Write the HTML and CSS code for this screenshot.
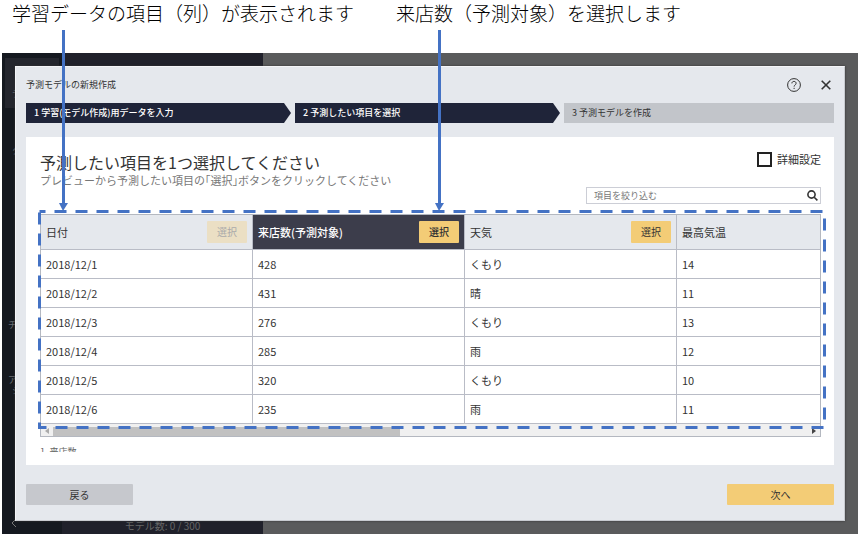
FILE: index.html
```html
<!DOCTYPE html>
<html lang="ja">
<head>
<meta charset="utf-8">
<title>予測モデルの新規作成</title>
<link rel="stylesheet" href="styles.css">
</head>
<body>
<header class="captions">
  <p class="caption caption-first">学習データの項目（列）が表示されます</p>
  <p class="caption">来店数（予測対象）を選択します</p>
</header>
<div class="arrow arrow-items"></div>
<div class="arrow arrow-target"></div>

<main class="app">
  <div class="backdrop">
    <nav class="rail">
      <span class="rail-item rail-item-active">デ</span>
      <span class="rail-item rail-second">タ</span>
      <span class="rail-item rail-third">チ</span>
      <span class="rail-item rail-fourth">ア</span>
      <span class="rail-item">シ</span>
      <svg class="rail-back" viewBox="0 0 6 10"><path d="M5 1 1 5l4 4"/></svg>
    </nav>
    <aside class="models">モデル数: 0 / 300</aside>
  </div>

  <section class="dialog">
    <div class="dialog-head">
      <h1 class="dialog-title">予測モデルの新規作成</h1>
      <button class="icon-button" type="button" aria-label="ヘルプ">
        <svg class="icon-help" viewBox="0 0 14 14"><circle cx="7" cy="7" r="6.4"/><path d="M4.9 5.4c0-1.3.9-2 2.1-2s2.1.8 2.1 1.9c0 1.6-2 1.7-2 3.3M7.1 9.8v1.2"/></svg>
      </button>
      <button class="icon-button" type="button" aria-label="閉じる">
        <svg class="icon-close" viewBox="0 0 10 10"><path d="M.7.7l8.6 8.6M9.3.7.7 9.3"/></svg>
      </button>
    </div>

    <ol class="steps">
      <li class="step step-done">1 学習(モデル作成)用データを入力</li>
      <li class="step step-done">2 予測したい項目を選択</li>
      <li class="step step-last">3 予測モデルを作成</li>
    </ol>

    <div class="panel">
      <div class="panel-head">
        <div>
          <h2 class="panel-title">予測したい項目を1つ選択してください</h2>
          <p class="panel-note">プレビューから予測したい項目の「選択」ボタンをクリックしてください</p>
        </div>
        <label class="detail"><input class="detail-box" type="checkbox">詳細設定</label>
      </div>
      <div class="search">
        <input class="search-input" type="search" aria-label="項目を絞り込む" placeholder="項目を絞り込む">
        <svg class="search-icon" viewBox="0 0 11 11"><circle cx="4.5" cy="4.5" r="3.6"/><path d="M7.2 7.2l3.2 3.2"/></svg>
      </div>

      <div class="preview">
        <table class="table">
          <colgroup><col class="col-wide"><col class="col-wide"><col class="col-wide"><col></colgroup>
          <thead>
            <tr>
              <th><div class="th">日付<button class="pick" type="button" disabled>選択</button></div></th>
              <th class="target"><div class="th">来店数(予測対象)<button class="pick" type="button">選択</button></div></th>
              <th><div class="th">天気<button class="pick" type="button">選択</button></div></th>
              <th><div class="th">最高気温</div></th>
            </tr>
          </thead>
          <tbody>
            <tr><td>2018/12/1</td><td>428</td><td>くもり</td><td>14</td></tr>
            <tr><td>2018/12/2</td><td>431</td><td>晴</td><td>11</td></tr>
            <tr><td>2018/12/3</td><td>276</td><td>くもり</td><td>13</td></tr>
            <tr><td>2018/12/4</td><td>285</td><td>雨</td><td>12</td></tr>
            <tr><td>2018/12/5</td><td>320</td><td>くもり</td><td>10</td></tr>
            <tr><td>2018/12/6</td><td>235</td><td>雨</td><td>11</td></tr>
          </tbody>
        </table>
        <div class="scrollbar">
          <svg class="scroll-arrow scroll-arrow-off" viewBox="0 0 4 6"><path d="M4 0v6L0 3z"/></svg>
          <div class="scroll-track"><div class="scroll-thumb"></div></div>
          <svg class="scroll-arrow" viewBox="0 0 4 6"><path d="M0 0v6l4-3z"/></svg>
        </div>
        <svg class="outline"><rect class="outline-rect"/></svg>
      </div>
      <p class="ranking">1. 来店数</p>
    </div>

    <div class="actions">
      <button class="action" type="button">戻る</button>
      <button class="action action-next" type="button">次へ</button>
    </div>
  </section>
</main>
</body>
</html>
```
FILE: styles.css
```css
* {
  box-sizing: border-box;
}

body {
  position: relative;
  margin: 0;
  background: #fff;
  color: #333;
  font-family: "Noto Sans CJK JP", sans-serif;
  font-size: 11px;
  line-height: 16px;
}

h1, h2, p, ol {
  margin: 0;
  padding: 0;
  font-weight: 400;
}

button, input {
  font: inherit;
  color: inherit;
  border: 0;
  padding: 0;
  margin: 0;
}

.captions {
  display: flex;
  gap: 42px;
  height: 53px;
  padding-left: 12px;
}

.caption {
  color: #000;
  font-size: 19px;
  font-weight: 300;
  line-height: 26px;
  white-space: nowrap;
}

.arrow {
  position: absolute;
  z-index: 2;
  top: 30px;
  width: 3px;
  height: 176px;
  background: #4472c4;
}

.arrow::after {
  content: "";
  position: absolute;
  top: 173px;
  left: -3px;
  border: solid transparent;
  border-width: 8px 5px 0 4px;
  border-top-color: #4472c4;
}

.arrow-items {
  left: 62px;
}

.arrow-target {
  left: 438px;
}

.app {
  display: grid;
  margin: 0 2px 2px;
}

.backdrop,
.dialog {
  grid-area: 1 / 1;
}

.backdrop {
  display: flex;
  background: #5a5b5c;
}

.rail {
  display: flex;
  flex-direction: column;
  width: 60px;
  padding: 5px 3px 6px;
  background: #151920;
  color: #6a6d72;
  font-size: 9px;
  line-height: 11px;
}

.rail-item {
  padding-left: 7px;
}

.rail-item-active {
  height: 50px;
  padding-top: 30px;
  background: #24262e;
}

.rail-second {
  margin-top: 37px;
}

.rail-third {
  margin-top: 163px;
  padding-left: 3px;
}

.rail-fourth {
  margin-top: 44px;
  padding-left: 3px;
}

.rail-back {
  width: 6px;
  height: 10px;
  margin: auto 0 0 6px;
  fill: none;
  stroke: #777;
}

.models {
  display: flex;
  align-items: flex-end;
  justify-content: center;
  width: 201px;
  background: #20212b;
  color: #666;
  font-size: 10px;
}

.dialog {
  margin: 13px;
  padding: 0 10px 15px;
  border: 1px solid #f4f5f8;
  border-right-color: #c8cbd0;
  border-bottom-color: #c8cbd0;
  background: #e5e8ed;
  box-shadow: 0 0 2px #333;
}

.dialog-head {
  display: flex;
  align-items: center;
  gap: 20px;
  height: 36px;
}

.dialog-title {
  flex: 1;
  font-size: 9px;
}

.icon-button {
  display: flex;
  background: none;
}

.icon-button svg {
  fill: none;
  stroke: #333;
}

.icon-help {
  width: 14px;
  height: 14px;
}

.icon-close {
  width: 10px;
  height: 10px;
  margin-right: 3px;
  stroke-width: 1.6;
}

.steps {
  display: flex;
  gap: 4px;
  list-style: none;
  font-size: 9px;
}

.step {
  flex: 1 1 8px;
  height: 20px;
  padding-left: 8px;
  background: #c2c5ca;
  line-height: 20px;
}

.step-last {
  flex-basis: 13px;
}

.step-done {
  background: #1f2439;
  color: #fff;
  font-weight: 500;
  clip-path: polygon(0 0, calc(100% - 7px) 0, 100% 50%, calc(100% - 7px) 100%, 0 100%);
}

.panel {
  margin-top: 14px;
  padding: 14px 13px 13px 14px;
  background: #fff;
}

.panel-head {
  display: flex;
  justify-content: space-between;
}

.panel-title {
  font-size: 16px;
  line-height: 22px;
}

.panel-note {
  color: #777;
  line-height: 14px;
  font-feature-settings: "halt";
}

.detail {
  display: flex;
  align-items: center;
  gap: 5px;
  height: 16px;
}

.detail-box {
  appearance: none;
  width: 15px;
  height: 15px;
  border: 2px solid #222;
  background: #fff;
}

.search {
  display: flex;
  align-items: center;
  width: 235px;
  height: 17px;
  margin: 0 0 10px auto;
  padding: 0 2px 0 7px;
  border: 1px solid #ccced6;
  font-size: 9px;
}

.search-input {
  flex: 1;
  min-width: 0;
  appearance: none;
  background: none;
  outline: 0;
}

.search-input::placeholder {
  color: #777;
}

.search-icon {
  width: 11px;
  height: 11px;
  fill: none;
  stroke: #333;
  stroke-width: 1.6;
}

.preview {
  position: relative;
  border: 1px solid #b4b8c0;
}

.table {
  width: 100%;
  table-layout: fixed;
  border-spacing: 0;
}

.col-wide {
  width: 212px;
}

.table th,
.table td {
  height: 29px;
  padding: 0 5px;
  border-right: 1px solid #b9bcc6;
  border-bottom: 1px solid #b9bcc6;
  text-align: left;
  font-weight: 400;
}

.table th {
  height: 35px;
  background: #e5e8ed;
}

.table th:last-child,
.table td:last-child {
  border-right: 0;
}

.table .target {
  background: #3c3d4b;
  color: #fff;
  font-weight: 500;
}

.th {
  display: flex;
  align-items: center;
  justify-content: space-between;
}

.pick {
  width: 40px;
  height: 22px;
  border-radius: 1px;
  background: #f3cc76;
  color: #333;
  font-size: 10px;
}

.pick:disabled {
  background: #ebdfc4;
  color: #aaa;
}

.scrollbar {
  display: flex;
  align-items: center;
  gap: 4px;
  height: 12px;
  padding: 2px 4px 0;
  background: #f0f0f0;
}

.scroll-arrow {
  width: 4px;
  height: 6px;
  fill: #444;
}

.scroll-arrow-off {
  fill: #aaa;
}

.scroll-track {
  flex: 1;
}

.scroll-thumb {
  width: 46%;
  height: 9px;
  background: #c1c1c1;
}

.outline {
  position: absolute;
  top: -5px;
  left: -3px;
  width: calc(100% + 9px);
  height: calc(100% - 2px);
}

.outline-rect {
  x: 1.5px;
  y: 1.5px;
  width: calc(100% - 3px);
  height: calc(100% - 3px);
  fill: none;
  stroke: #4472c4;
  stroke-width: 3;
  stroke-dasharray: 12 9;
  stroke-dashoffset: 6;
}

.ranking {
  height: 8px;
  margin-top: 7px;
  overflow: hidden;
  color: #666;
  font-size: 9px;
}

.actions {
  display: flex;
  justify-content: space-between;
  margin-top: 19px;
}

.action {
  width: 107px;
  height: 21px;
  border-radius: 1px;
  background: #c6c8cd;
  font-size: 10px;
}

.action-next {
  background: #f3cc76;
}
```
